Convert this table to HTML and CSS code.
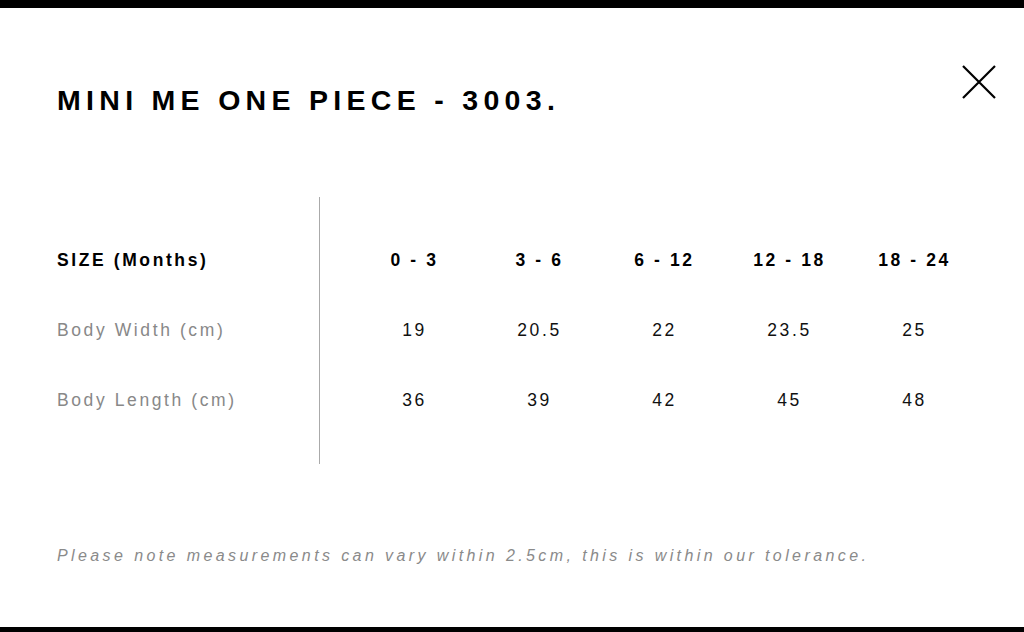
FILE: index.html
```html
<!DOCTYPE html>
<html>
<head>
<meta charset="utf-8">
<link rel="stylesheet" href="styles.css">
</head>
<body>
<div class="modal">
  <header class="head">
    <h1 class="title">MINI ME ONE PIECE - 3003.</h1>
    <button class="close" aria-label="Close">
      <svg width="36" height="36" viewBox="0 0 36 36"><path d="M2 2 L34 34 M34 2 L2 34" stroke="#000" stroke-width="2.2" fill="none"/></svg>
    </button>
  </header>
  <section class="chart">
    <div class="labels">
      <div class="cell label strong">SIZE (Months)</div>
      <div class="cell label">Body Width (cm)</div>
      <div class="cell label">Body Length (cm)</div>
    </div>
    <div class="values">
      <div class="cell strong">0 - 3</div>
      <div class="cell strong">3 - 6</div>
      <div class="cell strong">6 - 12</div>
      <div class="cell strong">12 - 18</div>
      <div class="cell strong">18 - 24</div>
      <div class="cell">19</div>
      <div class="cell">20.5</div>
      <div class="cell">22</div>
      <div class="cell">23.5</div>
      <div class="cell">25</div>
      <div class="cell">36</div>
      <div class="cell">39</div>
      <div class="cell">42</div>
      <div class="cell">45</div>
      <div class="cell">48</div>
    </div>
  </section>
  <p class="note">Please note measurements can vary within 2.5cm, this is within our tolerance.</p>
</div>
</body>
</html>
```
FILE: styles.css
```css
html, body {
  margin: 0;
  padding: 0;
  background: #fff;
}
body {
  font-family: "Liberation Sans", Arial, sans-serif;
  color: #000;
}
.modal {
  box-sizing: border-box;
  height: 632px;
  border-top: 8px solid #000;
  border-bottom: 5px solid #000;
  padding-left: 57px;
  display: flex;
  flex-direction: column;
}
.head {
  display: flex;
  justify-content: space-between;
  align-items: flex-start;
  padding-top: 56px;
}
.title {
  margin: 0;
  font-size: 28.5px;
  font-weight: bold;
  letter-spacing: 5.3px;
  line-height: 32px;
  margin-top: 20px;
}
.close {
  border: 0;
  background: none;
  padding: 0;
  margin-right: 27px;
  width: 36px;
  height: 36px;
  cursor: pointer;
}
.close svg { display: block; }
.chart {
  display: flex;
  margin-top: 81px;
}
.labels {
  width: 262px;
  border-right: 1px solid #aaa;
  padding: 28px 0 29px;
}
.values {
  display: grid;
  grid-template-columns: repeat(5, 125px);
  grid-auto-rows: 70px;
  margin-left: 32px;
  padding-top: 28px;
}
.cell {
  height: 70px;
  display: flex;
  align-items: center;
  justify-content: center;
  font-size: 17.5px;
  letter-spacing: 2.6px;
  color: #111;
}
.label {
  justify-content: flex-start;
  color: #888;
}
.strong {
  font-weight: bold;
  color: #000;
}
.note {
  margin: 83px 0 0;
  font-size: 16px;
  font-style: italic;
  color: #8a8a8a;
  letter-spacing: 3.4px;
}
```
